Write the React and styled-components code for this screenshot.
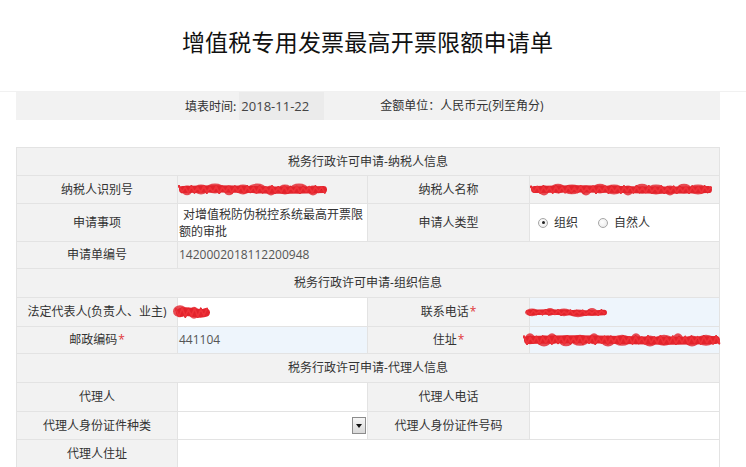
import React from "react";
import styled, { createGlobalStyle } from "styled-components";

const Global = createGlobalStyle`
  html, body { margin: 0; padding: 0; background: #fff; }
  body {
    font-family: "Open Sans", "Noto Sans CJK SC", sans-serif;
    font-size: 12px;
    color: #333;
  }
`;

const Header = styled.header`
  height: 91px;
  display: flex;
  align-items: center;
  justify-content: center;
  padding-right: 11px;
  border-bottom: 1px solid #f1f1f1;
  box-sizing: content-box;
`;

const Title = styled.h1`
  margin: 0 0 9px 0;
  font-family: "Noto Sans CJK SC", sans-serif;
  font-weight: 400;
  font-size: 23px;
  letter-spacing: 0.2px;
  line-height: 1;
  color: #111;
`;

const Content = styled.main`
  width: 704px;
  margin-left: 16px;
`;

const InfoBar = styled.div`
  height: 28px;
  display: flex;
  background: #f2f2f2;
  padding-left: 169px;
  line-height: 1;
`;

const InfoLabel = styled.span`
  display: flex;
  align-items: center;
  font-family: "Noto Sans CJK SC", sans-serif;
  color: #333;
`;

const DateBox = styled.span`
  display: flex;
  align-items: center;
  width: 83px;
  margin-left: 3px;
  padding-left: 2px;
  background: #ebebeb;
  font-size: 13px;
  color: #444;
`;

const UnitText = styled.span`
  display: flex;
  align-items: center;
  margin-left: 56px;
  color: #333;
`;

const Grid = styled.section`
  margin-top: 27px;
  display: grid;
  grid-template-columns: 161px 190px 162px 190px;
  grid-template-rows: 28px 28px 38px 27px 29px 29px 27px 29px 29px 28px 28px;
  border-top: 1px solid #e3e3e3;
  border-left: 1px solid #e3e3e3;
  box-sizing: border-box;
  width: 704px;
`;

const bgs = { gray: "#f2f2f2", white: "#ffffff", blue: "#eef5fc" };

const Cell = styled.div`
  box-sizing: border-box;
  border-right: 1px solid #e3e3e3;
  border-bottom: 1px solid #e3e3e3;
  display: flex;
  align-items: center;
  min-width: 0;
  line-height: 16px;
  background: ${(p) => bgs[p.$bg || "gray"]};
  grid-column: span ${(p) => p.$span || 1};
`;

const SectionHead = styled(Cell)`
  justify-content: center;
  grid-column: span 4;
  color: #333;
`;

const Label = styled(Cell)`
  justify-content: center;
  color: #333;
`;

const Value = styled(Cell)`
  padding-left: 1px;
  color: #555;
`;

const Req = styled.span`
  color: #e0363a;
  margin-left: 1px;
`;

const Memo = styled.div`
  padding: 1px 2px 0 0;
  color: #333;
  line-height: 17px;
  text-indent: 4px;
`;

const Choices = styled.div`
  display: flex;
  align-items: center;
  padding-left: 7px;
  color: #333;
`;

const Choice = styled.label`
  display: flex;
  align-items: center;
  gap: 6px;
  margin-right: 20px;
`;

const Radio = styled.span`
  width: 8px;
  height: 8px;
  border-radius: 50%;
  border: 1px solid #a6a6a6;
  background: radial-gradient(circle at 40% 40%, #fff 0%, #e6e6e6 100%);
  display: flex;
  align-items: center;
  justify-content: center;
  &::after {
    content: "";
    width: 3px;
    height: 3px;
    border-radius: 50%;
    background: ${(p) => (p.$on ? "#222" : "transparent")};
  }
`;

const SelectWrap = styled(Value)`
  justify-content: flex-end;
  padding-right: 1px;
`;

const SelectBtn = styled.span`
  width: 14px;
  height: 17px;
  box-sizing: border-box;
  border: 1px solid #8c8c8c;
  background: linear-gradient(#f6f6f6, #d9d9d9);
  display: flex;
  align-items: center;
  justify-content: center;
  &::after {
    content: "";
    border-left: 3.5px solid transparent;
    border-right: 3.5px solid transparent;
    border-top: 4px solid #111;
  }
`;

const ScribbleSvg = styled.svg`
  display: block;
  overflow: visible;
  margin-left: ${(p) => p.$shift || 0}px;
  flex: none;
`;

function Scribble({ w, h, shift = 0, seed = 1 }) {
  const lines = [];
  for (let k = 0; k < 3; k++) {
    let d = "";
    const step = 3.1;
    for (let x = 0, i = 0; x <= w; x += step, i++) {
      const a = Math.sin((i + seed * 3 + k * 7) * 1.7) * 0.5 + 0.5;
      const top = 1 + a * 1.5;
      const bot = h - 1 - (1 - a) * 1.5;
      const y = i % 2 === 0 ? top : bot;
      d += (i === 0 ? "M" : "L") + x.toFixed(1) + " " + y.toFixed(1) + " ";
    }
    lines.push(d);
  }
  const blobs = [];
  for (let i = 0; i < Math.max(2, Math.floor(w / 14)); i++) {
    const cx = 3 + ((i * 14 + seed * 5) % Math.max(4, w - 6));
    const cy = h / 2 + Math.sin(i * 2.1 + seed) * h * 0.12;
    blobs.push({ cx, cy, rx: 5 + (i % 3) * 2, ry: h * 0.55 });
  }
  return (
    <ScribbleSvg width={w} height={h} viewBox={`0 0 ${w} ${h}`} $shift={shift} aria-hidden="true">
      <path
        d={`M${h * 0.4} ${h / 2} Q ${w * 0.25} ${h * 0.35} ${w * 0.5} ${h / 2} T ${w - h * 0.4} ${h / 2}`}
        stroke="#e4252e"
        strokeWidth={h * 0.8}
        strokeLinecap="round"
        fill="none"
      />
      {blobs.map((b, i) => (
        <ellipse key={i} cx={b.cx} cy={b.cy} rx={b.rx} ry={b.ry} fill="#e2222b" opacity="0.8" />
      ))}
      {lines.map((d, i) => (
        <path
          key={i}
          d={d}
          stroke={i % 2 ? "#d01c26" : "#ee3138"}
          strokeWidth="1.8"
          strokeLinecap="round"
          strokeLinejoin="round"
          fill="none"
        />
      ))}
    </ScribbleSvg>
  );
}

export default function App() {
  return (
    <>
      <Global />
      <Header>
        <Title>增值税专用发票最高开票限额申请单</Title>
      </Header>
      <Content>
        <InfoBar>
          <InfoLabel>填表时间:</InfoLabel>
          <DateBox>2018-11-22</DateBox>
          <UnitText>金额单位：人民币元(列至角分)</UnitText>
        </InfoBar>

        <Grid>
          <SectionHead>税务行政许可申请-纳税人信息</SectionHead>

          <Label>纳税人识别号</Label>
          <Value>
            <Scribble w={148} h={9} seed={1} />
          </Value>
          <Label>纳税人名称</Label>
          <Value>
            <Scribble w={181} h={9} seed={2} />
          </Value>

          <Label>申请事项</Label>
          <Value $bg="white">
            <Memo>对增值税防伪税控系统最高开票限额的审批</Memo>
          </Value>
          <Label>申请人类型</Label>
          <Value $bg="white">
            <Choices>
              <Choice>
                <Radio $on />
                组织
              </Choice>
              <Choice>
                <Radio />
                自然人
              </Choice>
            </Choices>
          </Value>

          <Label>申请单编号</Label>
          <Value $span={3}>1420002018112200948</Value>

          <SectionHead>税务行政许可申请-组织信息</SectionHead>

          <Label>法定代表人(负责人、业主)</Label>
          <Value $bg="white">
            <Scribble w={34} h={11} shift={-3} seed={3} />
          </Value>
          <Label>
            联系电话<Req>*</Req>
          </Label>
          <Value $bg="blue">
            <Scribble w={80} h={7} shift={-4} seed={4} />
          </Value>

          <Label>
            邮政编码<Req>*</Req>
          </Label>
          <Value $bg="blue">441104</Value>
          <Label>
            住址<Req>*</Req>
          </Label>
          <Value $bg="blue">
            <Scribble w={196} h={10} shift={-7} seed={5} />
          </Value>

          <SectionHead>税务行政许可申请-代理人信息</SectionHead>

          <Label>代理人</Label>
          <Value $bg="white" />
          <Label>代理人电话</Label>
          <Value $bg="white" />

          <Label>代理人身份证件种类</Label>
          <SelectWrap $bg="white">
            <SelectBtn />
          </SelectWrap>
          <Label>代理人身份证件号码</Label>
          <Value $bg="white" />

          <Label>代理人住址</Label>
          <Value $bg="white" $span={3} />
        </Grid>
      </Content>
    </>
  );
}
